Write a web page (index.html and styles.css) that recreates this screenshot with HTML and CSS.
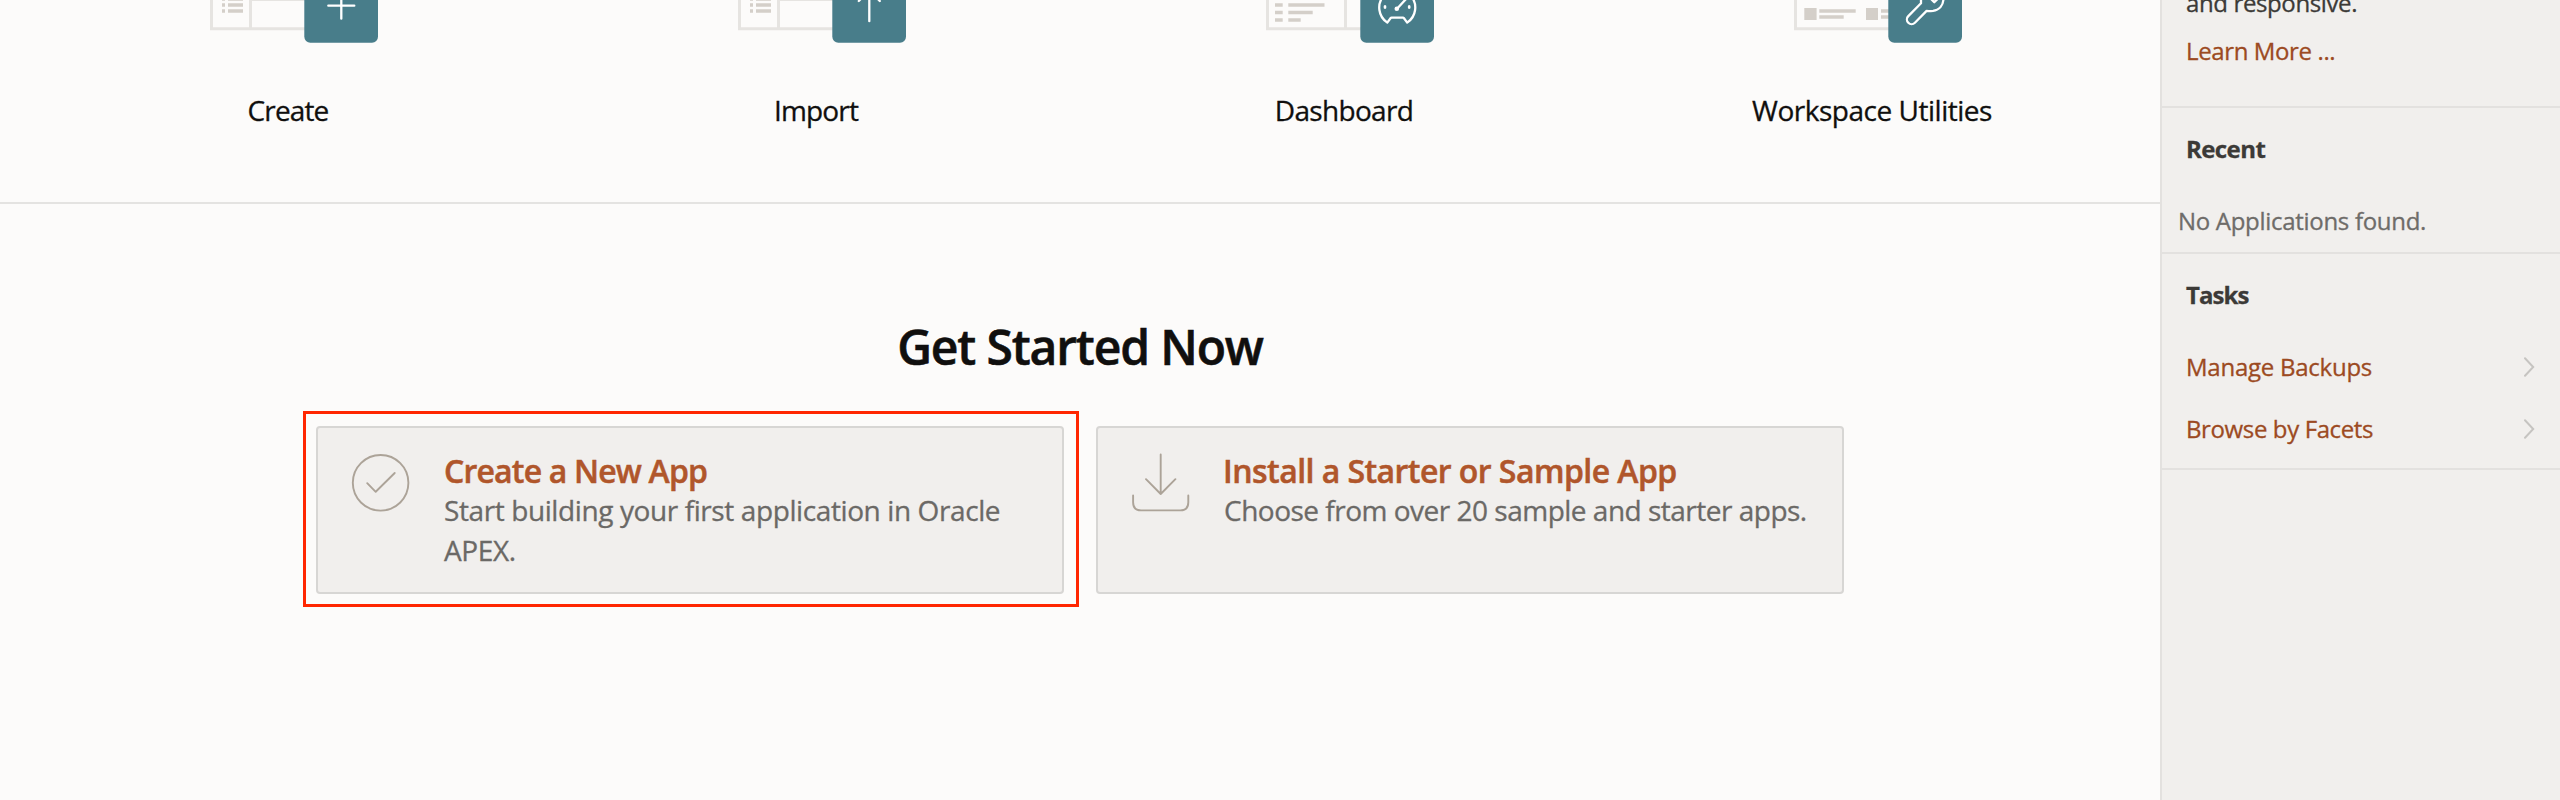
FILE: index.html
```html
<!DOCTYPE html>
<html lang="en">
<head>
<meta charset="utf-8">
<title>App Builder</title>
<link rel="stylesheet" href="styles.css">
</head>
<body>
<div class="page">
  <main class="main">
    <nav class="tiles">
      <a class="tile">
        <svg class="tile-art" viewBox="0 0 180 44">
          <path class="frame" d="M13.5 -4V28.8H110M52.5 -4V28.8"/>
          <path class="frame thin" d="M54 .3H110"/>
          <path class="rows" d="M24 -1H27M30 -1H45M24 5H27M30 5H45M24 11H27M30 11H45"/>
          <rect class="badge" x="106.3" y="-20" width="73.7" height="62.7" rx="6"/>
          <path class="glyph" d="M130.3 5.7H156.3M143.3 -8V18.7"/>
        </svg>
        <span class="tile-label create">Create</span>
      </a>
      <a class="tile">
        <svg class="tile-art" viewBox="0 0 180 44">
          <path class="frame" d="M13.5 -4V28.8H110M52.5 -4V28.8"/>
          <path class="frame thin" d="M54 .3H110"/>
          <path class="rows" d="M24 -1H27M30 -1H45M24 5H27M30 5H45M24 11H27M30 11H45"/>
          <rect class="badge" x="106.3" y="-20" width="73.7" height="62.7" rx="6"/>
          <path class="glyph" d="M143.3 -10V21.2M132.8 1L143.3 -10L153.8 1"/>
        </svg>
        <span class="tile-label create">Import</span>
      </a>
      <a class="tile">
        <svg class="tile-art" viewBox="0 0 180 44">
          <path class="frame" d="M13.5 -4V28.8H110M91.5 -4V28.8"/>
          <path class="rows" d="M21 5H28.7M34.3 5H70.5M21 12.5H28.7M34.3 12.5H58.7M21 20H28.7M34.3 20H46.7"/>
          <rect class="badge" x="106.3" y="-20" width="73.7" height="62.7" rx="6"/>
          <path class="glyph" d="M133.3 22.6A18 18 0 1 1 153.2 22.6L149.8 18Q149.5 17.6 149 17.6H137.5Q137 17.6 136.7 18Z"/>
          <path class="glyph" d="M143 8.7L153 -2"/>
          <circle class="dot" cx="142.8" cy="8.8" r="2.3"/>
          <ellipse class="dot" cx="131" cy="7" rx="1.4" ry="2"/>
          <ellipse class="dot" cx="155.2" cy="7" rx="1.4" ry="2"/>
        </svg>
        <span class="tile-label dash">Dashboard</span>
      </a>
      <a class="tile">
        <svg class="tile-art" viewBox="0 0 180 44">
          <path class="frame" d="M13.5 -4V28.8H110"/>
          <path class="rows" d="M37.3 11H73.7M37.3 17H61.7M99 11H108M99 17H108"/>
          <rect class="block" x="22.3" y="8" width="12.3" height="12"/>
          <rect class="block" x="84" y="8" width="12" height="12"/>
          <rect class="badge" x="106.3" y="-20" width="73.7" height="62.7" rx="6"/>
          <path class="glyph" d="M139 -4V3.2L126.3 16.1A4.6 4.6 0 0 0 132.9 22.7L144.6 10.9Q147 11.2 151 10.8C157 10 161.5 5.5 161.5 -2"/>
          <path class="glyph" d="M147 -3L152.3 2.2L157.6 -3"/>
        </svg>
        <span class="tile-label util">Workspace Utilities</span>
      </a>
    </nav>
    <section class="start">
      <h1 class="start-title">Get Started Now</h1>
      <div class="cards">
        <a class="card highlighted">
          <svg class="card-icon" viewBox="0 0 64 64">
            <circle cx="32.6" cy="32.8" r="27.8"/>
            <path d="M19.2 33.2L27.7 41.8L46.7 23"/>
          </svg>
          <span class="card-body">
            <strong class="card-title title-create">Create a New App</strong>
            <span class="card-text text-create">Start building your first application in Oracle APEX.</span>
          </span>
        </a>
        <a class="card">
          <svg class="card-icon" viewBox="0 0 64 64">
            <path d="M32.7 4.5V44M18 29.2L32.7 44L47.4 29.2M5.1 45.5V52.3Q5.1 60.4 13.1 60.4H52.3Q60.3 60.4 60.3 52.3V45.5"/>
          </svg>
          <span class="card-body">
            <strong class="card-title title-install">Install a Starter or Sample App</strong>
            <span class="card-text text-install">Choose from over 20 sample and starter apps.</span>
          </span>
        </a>
      </div>
    </section>
  </main>
  <aside class="side">
    <section class="panel about">
      <p class="side-text">and responsive.</p>
      <a class="side-link">Learn More ...</a>
    </section>
    <section class="panel recent">
      <h2 class="side-title">Recent</h2>
      <p class="empty">No Applications found.</p>
    </section>
    <section class="panel tasks">
      <h2 class="side-title tight">Tasks</h2>
      <ul class="task-list">
        <li class="task"><a class="side-link manage">Manage Backups</a><svg class="chevron" viewBox="0 0 12 20"><path d="M2 1.3L10.2 10L2 18.7"/></svg></li>
        <li class="task"><a class="side-link">Browse by Facets</a><svg class="chevron" viewBox="0 0 12 20"><path d="M2 1.3L10.2 10L2 18.7"/></svg></li>
      </ul>
    </section>
  </aside>
</div>
</body>
</html>
```
FILE: styles.css
```css
* { box-sizing: border-box; }
body {
  margin: 0;
  font-family: "Open Sans", "Noto Sans", sans-serif;
  background: #fcfbfa;
  color: #100f0e;
  -webkit-text-stroke: 0.3px currentColor;
}
h1, h2, p, ul { margin: 0; padding: 0; }
.page {
  display: grid;
  grid-template-columns: 2160px 400px;
  height: 800px;
  overflow: hidden;
}

/* Shortcut tiles */
.tiles {
  display: grid;
  grid-template-columns: repeat(4, 528px);
  justify-content: center;
  height: 204px;
  border-bottom: 2px solid #e4e3e1;
}
.tile {
  display: flex;
  flex-direction: column;
  align-items: center;
  gap: 46px;
}
.tile-art { width: 180px; height: 44px; display: block; }
.tile-label { font-size: 28px; line-height: 40px; white-space: nowrap; }
.create { letter-spacing: -0.85px; }
.dash { letter-spacing: -0.67px; }
.util { letter-spacing: -0.48px; }
.frame { fill: none; stroke: #e6e4e1; stroke-width: 3; }
.frame.thin { stroke-width: 1.6; }
.rows { fill: none; stroke: #d4cfc9; stroke-width: 3.4; }
.block { fill: #d4cfc9; }
.badge { fill: #487d8a; }
.glyph {
  fill: none;
  stroke: #fff;
  stroke-width: 2.3;
  stroke-linecap: round;
  stroke-linejoin: round;
}
.dot { fill: #fff; }

/* Get started */
.start {
  display: flex;
  flex-direction: column;
  align-items: center;
  gap: 49px;
  padding-top: 113px;
}
.start-title {
  font-size: 48px;
  font-weight: 600;
  line-height: 60px;
  letter-spacing: -1.15px;
  -webkit-text-stroke-width: 0.6px;
}
.cards { display: flex; gap: 32px; }
.card {
  display: flex;
  gap: 32px;
  width: 748px;
  height: 168px;
  padding: 22px 30px;
  border: 2px solid #d7d6d4;
  border-radius: 4px;
  background: #f1efed;
}
.highlighted { position: relative; }
.highlighted::after {
  content: "";
  position: absolute;
  inset: -17px -17px -15px -15px;
  border: 3px solid #ff2600;
}
.card-icon {
  flex: none;
  width: 64px;
  height: 64px;
  fill: none;
  stroke: #aca398;
  stroke-width: 1.9;
  stroke-linecap: round;
  stroke-linejoin: round;
}
.card-body { display: flex; flex-direction: column; min-width: 0; }
.card-title {
  height: 40px;
  padding-top: 1px;
  font-size: 32px;
  font-weight: 600;
  line-height: 40px;
  color: #b0562b;
  white-space: nowrap;
  -webkit-text-stroke-width: 0.5px;
}
.title-create { letter-spacing: -0.82px; }
.title-install { letter-spacing: -0.55px; margin-left: -1px; }
.card-text { font-size: 28px; line-height: 40px; color: #6b6966; }
.text-create { letter-spacing: -0.4px; }
.text-install { letter-spacing: -0.5px; white-space: nowrap; }

/* Sidebar */
.side {
  border-left: 2px solid #e3e1df;
  background: #f1efed;
  font-size: 24px;
  line-height: 36px;
  letter-spacing: -0.38px;
}
.panel { border-bottom: 2px solid #e3e1df; padding: 0 25px 0 24px; }
.about {
  display: flex;
  flex-direction: column;
  justify-content: flex-end;
  gap: 12px;
  height: 108px;
  padding-bottom: 37px;
}
.recent { height: 146px; padding-top: 23px; }
.tasks { height: 216px; padding-top: 23px; }
.side-text { color: #3c3a37; }
.side-link { color: #9c4a22; }
.manage { letter-spacing: -0.25px; }
.side-title { font-size: 24px; font-weight: 700; line-height: 36px; letter-spacing: -0.58px; color: #3c3a37; }
.tight { letter-spacing: -0.9px; }
.empty { margin: 36px 0 0 -8px; color: #6e6c69; letter-spacing: -0.3px; }
.task-list {
  display: flex;
  flex-direction: column;
  gap: 26px;
  margin-top: 36px;
  list-style: none;
}
.task { display: flex; justify-content: space-between; align-items: center; }
.chevron { width: 12px; height: 20px; fill: none; stroke: #c6c4c1; stroke-width: 2; stroke-linecap: round; }
```
